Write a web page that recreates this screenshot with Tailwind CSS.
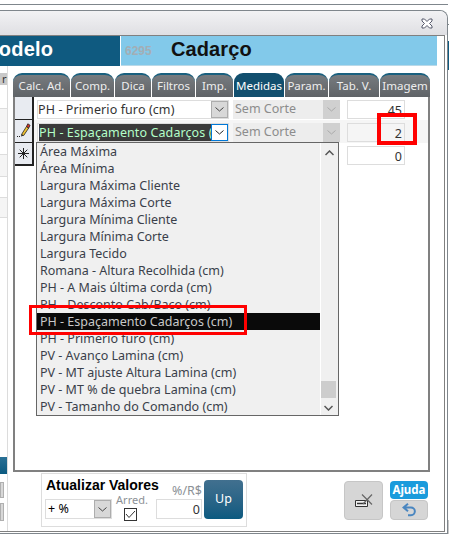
<!DOCTYPE html>
<html lang="en">
<head>
<meta charset="UTF-8">
<title>Medidas</title>
<script src="https://cdn.jsdelivr.net/npm/@tailwindcss/browser@4"></script>
</head>
<body class="bg-white">
<div class="relative w-[449px] h-[534px] overflow-hidden bg-white font-['Noto_Sans',sans-serif] text-[12.5px] text-[#333]">
  <div class="h-1"></div>
  <div class="h-px w-[448px] bg-[#7f868c]"></div>
  <div class="h-[5px]"></div>

  <!-- window -->
  <div class="w-[448px] h-[524px] border-t border-r border-b border-[#7f868c] rounded-tr-lg flex flex-col">
    <div class="h-[24px] shrink-0 bg-gradient-to-b from-[#f2f2f4] to-[#dfdfe3] flex justify-end items-center pr-[14px] pt-px rounded-tr-lg">
      <svg width="12" height="11" viewBox="0 0 12 11"><path d="M1 1h2.500L6 3.500 8.500 1H11v2L8.500 5.500 11 8v2H8.500L6 7.500 3.500 10H1V8l2.500-2.500L1 3z" fill="#fff" stroke="#55586a" stroke-width="1"/></svg>
    </div>
    <div class="flex-1 flex flex-col w-[445px] mb-px border-t border-r border-b border-[#808080]">
      <!-- header band -->
      <div class="h-[30px] shrink-0 flex">
        <div class="w-[120px] bg-[#0f5a80] text-white font-['Liberation_Sans',sans-serif] font-bold text-[20px] leading-[27px] relative overflow-hidden">
          <span class="block -ml-[18px] tracking-[0.2px]">Modelo</span>
        </div>
        <div class="w-px bg-white"></div>
        <div class="w-[316px] bg-[#82c9ea] border-b border-[#b9d9e8] flex items-center">
          <span class="ml-[4px] w-[46px] text-[12px] font-bold text-[#a3aeb5] font-['Liberation_Sans',sans-serif]">6295</span>
          <span class="font-['Liberation_Sans',sans-serif] font-bold text-[20px] text-[#111] tracking-[0.1px] -mt-[3px]">Cadarço</span>
        </div>
      </div>

      <div class="flex-1 flex min-h-0">
        <!-- cropped left panel -->
        <div class="w-[8px] shrink-0 border-r border-[#dcdcdc] flex flex-col pt-[7px] text-[11px]">
          <div class="h-[12px] bg-[#c9c9c9] overflow-hidden leading-[12px] text-[#333] whitespace-nowrap pl-[2px]">ru</div>
          <div class="h-[24px] border-b border-[#dddddd]"></div>
          <div class="h-[24px] border-b border-[#dddddd] bg-[#f5f5f5]"></div>
          <div class="h-[22px] border-b border-[#dddddd]"></div>
          <div class="h-[22px] border-b border-[#dddddd] bg-[#f5f5f5]"></div>
          <div class="h-[21px] border-b border-[#dddddd]"></div>
          <div class="h-[20px] border-b border-[#dddddd] bg-[#f5f5f5]"></div>
          <div class="h-[239px]"></div>
          <div class="h-[17px] bg-gradient-to-b from-[#2a7196] to-[#0a5a80]"></div>
          <div class="h-[8px]"></div>
          <div class="h-[16px] w-[4px] bg-[#d8d8d8] border border-[#b0b0b0]"></div>
          <div class="h-[5px]"></div>
          <div class="h-[18px] w-[4px] bg-[#d8d8d8] border border-[#b0b0b0]"></div>
        </div>

        <div class="flex-1 min-w-0 pl-[5px]">
          <!-- tabs -->
          <div class="mt-[7px] w-[417px] h-[24px] flex gap-px text-[11.5px] text-[#eeeeee] text-center leading-[21px]">
            <div class="w-[57px] rounded-t-[9px] border-t-2 border-[#19607f] bg-gradient-to-b from-[#777b7f] to-[#5f6367] whitespace-nowrap">Calc. Ad.</div>
            <div class="w-[43px] rounded-t-[9px] border-t-2 border-[#19607f] bg-gradient-to-b from-[#777b7f] to-[#5f6367] whitespace-nowrap">Comp.</div>
            <div class="w-[36px] rounded-t-[9px] border-t-2 border-[#19607f] bg-gradient-to-b from-[#777b7f] to-[#5f6367] whitespace-nowrap">Dica</div>
            <div class="w-[43px] rounded-t-[9px] border-t-2 border-[#19607f] bg-gradient-to-b from-[#777b7f] to-[#5f6367] whitespace-nowrap">Filtros</div>
            <div class="w-[37px] rounded-t-[9px] border-t-2 border-[#19607f] bg-gradient-to-b from-[#777b7f] to-[#5f6367] whitespace-nowrap">Imp.</div>
            <div class="w-[50px] rounded-t-[9px] bg-[#124f6e] text-white whitespace-nowrap leading-[26px]">Medidas</div>
            <div class="w-[43px] rounded-t-[9px] border-t-2 border-[#19607f] bg-gradient-to-b from-[#777b7f] to-[#5f6367] whitespace-nowrap">Param.</div>
            <div class="w-[50px] rounded-t-[9px] border-t-2 border-[#19607f] bg-gradient-to-b from-[#777b7f] to-[#5f6367] whitespace-nowrap">Tab. V.</div>
            <div class="w-[50px] rounded-t-[9px] border-t-2 border-[#19607f] bg-gradient-to-b from-[#777b7f] to-[#5f6367] whitespace-nowrap">Imagem</div>
          </div>

          <!-- tab panel -->
          <div class="w-[417px] h-[375px] border-2 border-t-0 border-[#808080]">
            <div class="h-[23px] flex">
              <div class="w-[19px] shrink-0 bg-[#e8ebf1] border-r-2 border-b border-[#222]"></div>
              <div class="ml-[3px] mt-[3px] w-[192px] h-[19px] flex border border-[#dddddd] bg-white">
                <span class="flex-1 leading-[17px] tracking-[0.1px] whitespace-nowrap overflow-hidden">PH - Primerio furo (cm)</span>
                <span class="w-[17px] bg-[#d8d8d8] border border-[#adadad] flex items-center justify-center">
                  <svg width="9" height="5" viewBox="0 0 9 5"><path d="M.5.500 4.500 4 8.500.5" fill="none" stroke="#444" stroke-width="1"/></svg>
                </span>
              </div>
              <div class="ml-[4px] mt-[3px] w-[107px] h-[19px] flex bg-[#ededed]">
                <span class="flex-1 pl-[2px] leading-[18px] text-[#8c8c8c]">Sem Corte</span>
                <span class="w-[17px] bg-[#d0d0d0] flex items-center justify-center">
                  <svg width="9" height="5" viewBox="0 0 9 5"><path d="M.5.500 4.500 4 8.500.5" fill="none" stroke="#aaa" stroke-width="1"/></svg>
                </span>
              </div>
              <div class="ml-[7px] mt-[3px] w-[58px] h-[19px] border border-[#dddddd] bg-white text-right pr-[2px] leading-[19px]">45</div>
            </div>

            <div class="h-[23px] flex bg-[#f5f5f5]">
              <div class="w-[19px] shrink-0 bg-[#e8ebf1] border-r-2 border-b border-[#222] flex items-start justify-end pt-[3px] pr-px">
                <svg width="16" height="15" viewBox="0 0 16 15">
                  <path d="M6.500 11.500 11.500 3.500l2.200 1.500-5 7.500z" fill="#f2c230" stroke="#222" stroke-width=".8"/>
                  <path d="M11.500 3.500 12.800.8l2.300 1.500-1.400 2.700z" fill="#d8342a" stroke="#222" stroke-width=".8"/>
                  <path d="M6.500 11.500 6 13.500 8.700 12.500z" fill="#222"/>
                  <path d="M2 13.500h1M4 13.500h1" stroke="#222" stroke-width="1"/>
                </svg>
              </div>
              <div class="ml-[3px] mt-[3px] w-[192px] h-[19px] flex border border-[#dddddd] bg-white">
                <span class="w-[172px] ml-px bg-[#3a3a3a] text-[#b4ffc8] leading-[17px] tracking-[0.1px] whitespace-nowrap overflow-hidden">PH - Espaçamento Cadarços (cm)</span>
                <span class="ml-auto w-[17px] bg-white border border-[#0078d7] flex items-center justify-center">
                  <svg width="9" height="5" viewBox="0 0 9 5"><path d="M.5.500 4.500 4 8.500.5" fill="none" stroke="#222" stroke-width="1"/></svg>
                </span>
              </div>
              <div class="ml-[4px] mt-[3px] w-[107px] h-[19px] flex bg-[#ededed]">
                <span class="flex-1 pl-[2px] leading-[18px] text-[#8c8c8c]">Sem Corte</span>
                <span class="w-[17px] bg-[#d0d0d0] flex items-center justify-center">
                  <svg width="9" height="5" viewBox="0 0 9 5"><path d="M.5.500 4.500 4 8.500.5" fill="none" stroke="#aaa" stroke-width="1"/></svg>
                </span>
              </div>
              <div class="ml-[7px] mt-[3px] w-[58px] h-[19px] border border-[#dddddd] bg-[#f5f5f5] text-right pr-[2px] leading-[19px]">2</div>
            </div>

            <div class="h-[23px] flex">
              <div class="w-[19px] shrink-0 bg-[#e8ebf1] border-r-2 border-b-2 border-[#222] flex items-center justify-center">
                <svg width="11" height="11" viewBox="0 0 11 11"><path d="M5.500 0v11M0 5.500h11M1.700 1.700l7.600 7.600M9.300 1.700l-7.600 7.600" stroke="#222" stroke-width="1"/></svg>
              </div>
              <div class="ml-[313px] mt-[3px] w-[58px] h-[19px] border border-[#dddddd] bg-white text-right pr-[2px] leading-[19px]">0</div>
            </div>
          </div>

          <!-- update values group -->
          <div class="ml-[28px] mt-[1px] w-[206px] h-[54px] border border-[#dddddd] flex">
            <div class="w-[72px] shrink-0 pl-[3px]">
              <div class="pl-[1px] pt-[3px] h-[25px] font-['Liberation_Sans',sans-serif] font-bold text-[14px] leading-[16px] text-black whitespace-nowrap">Atualizar Valores</div>
              <div class="w-[67px] h-[20px] border border-[#dddddd] flex text-black">
                <span class="flex-1 pl-[2px] leading-[18px]">+ %</span>
                <span class="w-[17px] bg-[#d8d8d8] border border-[#adadad] flex items-center justify-center">
                  <svg width="9" height="5" viewBox="0 0 9 5"><path d="M.5.500 4.500 4 8.500.5" fill="none" stroke="#444" stroke-width="1"/></svg>
                </span>
              </div>
            </div>
            <div class="w-[36px] shrink-0 mt-[18px] flex flex-col items-center">
              <span class="text-[#8c9196] text-[11px] leading-[15px] whitespace-nowrap">Arred.</span>
              <span class="w-[13px] h-[13px] border border-[#333] bg-white flex items-center justify-center mt-px -ml-[3px]">
                <svg width="11" height="9" viewBox="0 0 11 9"><path d="M1 4l3 3.500L10 1" fill="none" stroke="#333" stroke-width="1"/></svg>
              </span>
            </div>
            <div class="ml-[6px] w-[46px] shrink-0 pt-[9px] text-right">
              <div class="text-[#8c9196] leading-[16px] whitespace-nowrap">%/R$</div>
              <div class="w-[46px] h-[20px] border border-[#dddddd] pr-[1px] leading-[19px]">0</div>
            </div>
            <div class="ml-[2px] mt-[6px] w-[39px] h-[39px] rounded-[4px] bg-gradient-to-b from-[#41708f] to-[#0a5a80] text-white flex items-center justify-center">Up</div>
          </div>
        </div>
      </div>
    </div>
  </div>

  <!-- slivers of the window behind, at the right edge -->
  <div class="absolute left-[448px] top-[24px] w-px h-px bg-[#7f868c]"></div>
  <div class="absolute left-[448px] top-[41px] w-px h-[29px] bg-[#0f5a80]"></div>
  <div class="absolute left-[448px] top-[520px] w-px h-[14px] bg-[#c8c8c8]"></div>

  <!-- cancel / help buttons -->
  <div class="absolute left-[344px] top-[481px] w-[39px] h-[39px] rounded-[4px] bg-[#d6d6d6] border border-[#c6c6c6] flex items-center justify-center">
    <svg width="18" height="14" viewBox="0 0 18 14">
      <path d="M.5 6.500h12v6H.5z" fill="#f2f2f2" stroke="#333" stroke-width="1"/>
      <path d="M2 9.500h9" stroke="#333" stroke-width="1.500"/>
      <path d="M7 .5l10 10M17 .5 8 10" stroke="#666" stroke-width="1.200" fill="none"/>
    </svg>
  </div>
  <div class="absolute left-[390px] top-[481px] w-[38px] h-[18px] rounded-[4px] bg-[#1a9bdc] text-white font-bold text-[11.5px] leading-[18px] text-center">Ajuda</div>
  <div class="absolute left-[390px] top-[500px] w-[38px] h-[20px] rounded-[4px] bg-[#d6d6d6] border border-[#c6c6c6] flex items-center justify-center">
    <svg width="15" height="14" viewBox="0 0 15 14"><path d="M6 .8 1.500 4.500 6 8.200M2 4.500h7a3.800 3.800 0 0 1 0 7.700H6" fill="none" stroke="#4a86c0" stroke-width="2"/></svg>
  </div>

  <!-- open dropdown list -->
  <div class="absolute left-[36px] top-[142px] w-[303px] h-[274px] border border-[#666] bg-[#f0f0f0] flex">
    <ul class="w-[283px] shrink-0 leading-[17px] text-[#3a3f4a]">
      <li class="h-[17px] pl-[3px]">Área Máxima</li>
      <li class="h-[17px] pl-[3px]">Área Mínima</li>
      <li class="h-[17px] pl-[3px]">Largura Máxima Cliente</li>
      <li class="h-[17px] pl-[3px]">Largura Máxima Corte</li>
      <li class="h-[17px] pl-[3px]">Largura Mínima Cliente</li>
      <li class="h-[17px] pl-[3px]">Largura Mínima Corte</li>
      <li class="h-[17px] pl-[3px]">Largura Tecido</li>
      <li class="h-[17px] pl-[3px]">Romana - Altura Recolhida (cm)</li>
      <li class="h-[17px] pl-[3px]">PH - A Mais última corda (cm)</li>
      <li class="h-[17px] pl-[3px]">PH - Desconto Cab/Baco (cm)</li>
      <li class="h-[17px] pl-[3px] bg-[#0a0a0a] text-[#c8c8c8]">PH - Espaçamento Cadarços (cm)</li>
      <li class="h-[17px] pl-[3px]">PH - Primerio furo (cm)</li>
      <li class="h-[17px] pl-[3px]">PV - Avanço Lamina (cm)</li>
      <li class="h-[17px] pl-[3px]">PV - MT ajuste Altura Lamina (cm)</li>
      <li class="h-[17px] pl-[3px]">PV - MT % de quebra Lamina (cm)</li>
      <li class="h-[17px] pl-[3px]">PV - Tamanho do Comando (cm)</li>
    </ul>
    <div class="flex-1 border-l border-white flex flex-col items-center">
      <svg class="mt-[7px]" width="9" height="6" viewBox="0 0 9 6"><path d="M.5 5 4.500 1l4 4" fill="none" stroke="#555" stroke-width="1.500"/></svg>
    </div>
  </div>
  <div class="absolute left-[321px] top-[381px] w-[15px] h-[17px] bg-[#cdcdcd]"></div>
  <svg class="absolute left-[324px] top-[405px]" width="9" height="6" viewBox="0 0 9 6"><path d="M.5 1 4.500 5l4-4" fill="none" stroke="#555" stroke-width="1.500"/></svg>

  <!-- red annotations -->
  <div class="absolute left-[29px] top-[305px] w-[218px] h-[30px] border-[3px] border-[#ff0000]"></div>
  <div class="absolute left-[377px] top-[113px] w-[40px] h-[32px] border-[4px] border-[#ff0000]"></div>
</div>
</body>
</html>
